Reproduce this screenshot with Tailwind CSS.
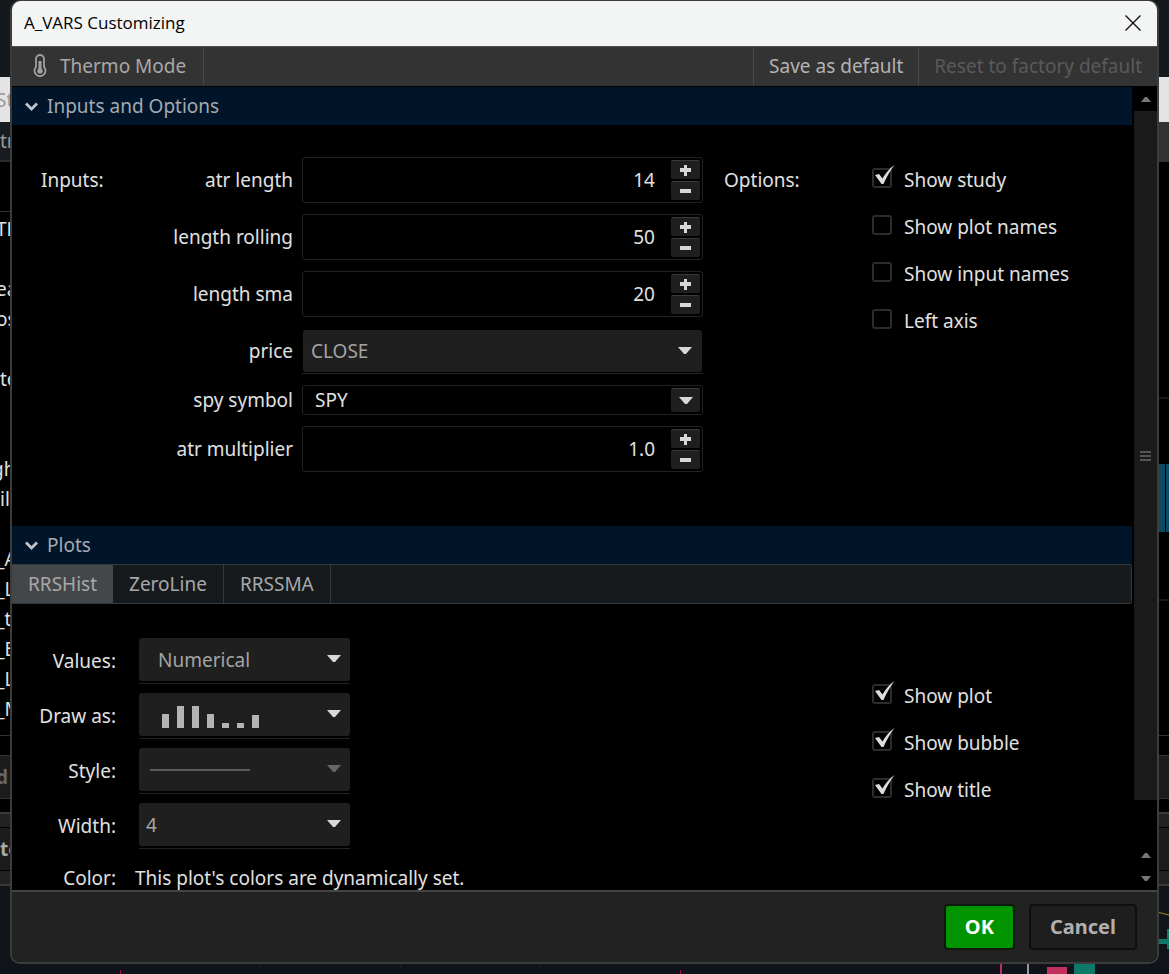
<!DOCTYPE html>
<html lang="en">
<head>
  <meta charset="UTF-8">
  <meta name="viewport" content="width=device-width, initial-scale=1.0">
  <title>A_VARS Customizing</title>
  <script src="https://cdn.jsdelivr.net/npm/@tailwindcss/browser@4"></script>
</head>
<body class="bg-[#10141a] font-['Noto_Sans','Open_Sans',sans-serif] text-[19px] leading-6 text-[#e0e0e0]">
  <div class="relative h-screen overflow-hidden pb-[10px]">

    <!-- windows behind the dialog -->
    <div class="absolute inset-0 overflow-hidden" aria-hidden="true">
      <div class="h-[77px] bg-[#14191e]"></div>
      <div class="flex h-[45px] items-center bg-[#e4e4e4] text-[#999]"><span class="-ml-1">St</span></div>
      <div class="flex h-10 items-center border-b-2 border-[#2c2c2c] bg-[#181b20] text-[#999]">tr</div>
      <div class="h-[50px] border-b border-[#333] bg-black"></div>
      <div class="flex h-[523px] flex-col bg-black pt-[2px]">
        <div class="-ml-1 flex h-[30px] items-center">TF</div>
        <div class="h-[30px]"></div>
        <div class="-ml-1 flex h-[30px] items-center">ea</div>
        <div class="-ml-1 flex h-[30px] items-center">os</div>
        <div class="h-[30px]"></div>
        <div class="flex h-[30px] items-center">te</div>
        <div class="h-[60px]"></div>
        <div class="-ml-2 flex h-[30px] items-center">gh</div>
        <div class="flex h-[30px] items-center">il</div>
        <div class="h-[30px]"></div>
        <div class="-ml-1 flex h-[30px] items-center">_A</div>
        <div class="-ml-1 flex h-[30px] items-center">_L</div>
        <div class="-ml-1 flex h-[30px] items-center">_t</div>
        <div class="-ml-1 flex h-[30px] items-center">_E</div>
        <div class="-ml-1 flex h-[30px] items-center">_L</div>
        <div class="-ml-1 flex h-[30px] items-center">_M</div>
      </div>
      <div class="h-5 border-t border-[#333] bg-black"></div>
      <div class="flex h-11 items-center border-y border-[#333] bg-[#1c1c1c] font-bold text-[#666]"><span class="-ml-1">d</span></div>
      <div class="h-[13px] bg-black"></div>
      <div class="h-[15px] border-t-2 border-[#3a3a3a] bg-[#222]"></div>
      <div class="flex h-11 items-center border-y border-black bg-[#1c1c1c] font-bold text-[#aaa]">te</div>
      <div class="h-[15px] border-b-2 border-[#3a3a3a] bg-[#222]"></div>

      <!-- chart pieces along the right and bottom edges -->
      <svg class="absolute right-0 top-0" width="12" height="974" viewBox="0 0 12 974">
        <path d="M0 122h12v40H0z" fill="#333"/>
        <path d="M0 163h12v570H0z" fill="#000"/>
        <path d="M0 398h12M0 600h12" stroke="#333"/>
        <path d="M2 464h6v68H2zM9 464h3v68H9z" fill="#0b4a63"/>
        <path d="M0 912l12 3" stroke="#b08c10" fill="none"/>
        <path d="M2 939h8v-10h2v20h-2v-5H2z" fill="#0c7a6b"/>
      </svg>
      <svg class="absolute bottom-0 right-0" width="200" height="12" viewBox="0 0 200 12">
        <path d="M21 1h20M32 1v11" stroke="#b8315f" fill="none" stroke-width="2"/>
        <path d="M59 0v12" stroke="#999" stroke-width="2"/>
        <path d="M78 5h20v7H78z" fill="#c2305f"/>
        <path d="M105 0h21v12h-21z" fill="#0c7a6b"/>
      </svg>
      <svg class="absolute bottom-0 left-0" width="700" height="12" viewBox="0 0 700 12">
        <path d="M120.500 8v4M680.500 8v4" stroke="#a01030"/>
        <path d="M260 5h1M400 5h1M540 5h1" stroke="#333"/>
      </svg>
    </div>

    <!-- dialog -->
    <main class="relative mx-[10px] flex h-full flex-col overflow-hidden rounded-[10px] border-2 border-t border-[#3c3c3c] bg-black">
      <header class="flex h-[45px] shrink-0 items-center justify-between bg-[#f3f4f4] pb-[2px] pl-3 pr-4 text-black">
        <h1 class="font-['Open_Sans','Noto_Sans',sans-serif] text-[17px]">A_VARS Customizing</h1>
        <button type="button" aria-label="Close" class="flex h-4 w-4 items-center justify-center">
          <svg width="16" height="16" viewBox="0 0 16 16" fill="none" stroke="#111" stroke-width="1.400"><path d="M.5.5l15 15M15.500.5l-15 15"/></svg>
        </button>
      </header>

      <div class="flex h-10 shrink-0 border-t border-[#505050] bg-[#333] pb-px">
        <button type="button" class="flex items-center gap-3 border-r border-[#4a4a4a] pl-5 pr-[17px] text-[#a8a8a8]">
          <svg width="16" height="24" viewBox="0 0 16 24" fill="none" stroke="#a0a0a0" stroke-width="1.800">
            <path d="M4 13V5a4 4 0 0 1 8 0v8a5.500 5.500 0 1 1-8 0z"/>
            <path d="M8 7v10" stroke-width="3"/>
            <circle cx="8" cy="17" r="2.700" fill="#a0a0a0" stroke="none"/>
          </svg>
          Thermo Mode
        </button>
        <div class="flex-1"></div>
        <button type="button" class="border-l border-[#4a4a4a] px-[15px] text-[#b4b4b4]">Save as default</button>
        <button type="button" disabled class="border-l border-[#4a4a4a] px-[15px] text-[#5a5a5a]">Reset to factory default</button>
      </div>

      <div class="flex min-h-0 flex-1 border-t border-black">
        <div class="min-w-0 flex-1 overflow-hidden">
          <h2>
            <button type="button" class="flex h-[38px] w-full items-center gap-[9px] bg-[#00152a] pl-[13px] text-[#a4aab0]">
              <svg width="13" height="9" viewBox="0 0 13 9" fill="none" stroke="#c0c4c8" stroke-width="2.800"><path d="M1 1.500l5.500 5.500L12 1.500"/></svg>
              Inputs and Options
            </button>
          </h2>

          <section class="flex pb-[54px] pt-8">
            <h3 class="w-[110px] shrink-0 pl-[29px] pt-[11px]">Inputs:</h3>
            <div class="mr-[21px] grid min-w-0 flex-1 grid-cols-[171px_minmax(0,1fr)] items-center gap-x-[9px] gap-y-[11px]">
              <label for="atr-length" class="text-right">atr length</label>
              <div class="flex h-[46px] rounded-[3px] border border-[#222] bg-black p-[2px]">
                <input id="atr-length" type="text" inputmode="numeric" value="14" class="min-w-0 flex-1 pr-4 text-right outline-none">
                <div class="flex w-[29px] flex-col gap-[2px]">
                  <button type="button" aria-label="Increase atr length" class="flex flex-1 items-center justify-center rounded-[2px] border-t border-[#3a3a3a] bg-[#1f1f1f]"><svg width="11" height="11" viewBox="0 0 11 11" fill="#d8d8d8"><path d="M4 0h3v3h4v4H7v4H4V7H0V3h4z"/></svg></button>
                  <button type="button" aria-label="Decrease atr length" class="flex flex-1 items-center justify-center rounded-[2px] border-t border-[#3a3a3a] bg-[#1f1f1f]"><svg width="11" height="11" viewBox="0 0 11 11" fill="#d8d8d8"><path d="M0 3h11v4H0z"/></svg></button>
                </div>
              </div>

              <label for="length-rolling" class="text-right">length rolling</label>
              <div class="flex h-[46px] rounded-[3px] border border-[#222] bg-black p-[2px]">
                <input id="length-rolling" type="text" inputmode="numeric" value="50" class="min-w-0 flex-1 pr-4 text-right outline-none">
                <div class="flex w-[29px] flex-col gap-[2px]">
                  <button type="button" aria-label="Increase length rolling" class="flex flex-1 items-center justify-center rounded-[2px] border-t border-[#3a3a3a] bg-[#1f1f1f]"><svg width="11" height="11" viewBox="0 0 11 11" fill="#d8d8d8"><path d="M4 0h3v3h4v4H7v4H4V7H0V3h4z"/></svg></button>
                  <button type="button" aria-label="Decrease length rolling" class="flex flex-1 items-center justify-center rounded-[2px] border-t border-[#3a3a3a] bg-[#1f1f1f]"><svg width="11" height="11" viewBox="0 0 11 11" fill="#d8d8d8"><path d="M0 3h11v4H0z"/></svg></button>
                </div>
              </div>

              <label for="length-sma" class="text-right">length sma</label>
              <div class="flex h-[46px] rounded-[3px] border border-[#222] bg-black p-[2px]">
                <input id="length-sma" type="text" inputmode="numeric" value="20" class="min-w-0 flex-1 pr-4 text-right outline-none">
                <div class="flex w-[29px] flex-col gap-[2px]">
                  <button type="button" aria-label="Increase length sma" class="flex flex-1 items-center justify-center rounded-[2px] border-t border-[#3a3a3a] bg-[#1f1f1f]"><svg width="11" height="11" viewBox="0 0 11 11" fill="#d8d8d8"><path d="M4 0h3v3h4v4H7v4H4V7H0V3h4z"/></svg></button>
                  <button type="button" aria-label="Decrease length sma" class="flex flex-1 items-center justify-center rounded-[2px] border-t border-[#3a3a3a] bg-[#1f1f1f]"><svg width="11" height="11" viewBox="0 0 11 11" fill="#d8d8d8"><path d="M0 3h11v4H0z"/></svg></button>
                </div>
              </div>

              <label for="price" class="text-right">price</label>
              <div class="relative border-b border-[#262626] px-px pb-px pt-[2px]">
                <select id="price" class="block h-[42px] w-full appearance-none rounded-[3px] bg-[#1f1f1f] pl-2 text-[#a4a4a4] outline-none">
                  <option>CLOSE</option>
                </select>
                <svg class="pointer-events-none absolute right-[11px] top-[19px]" width="14" height="8" viewBox="0 0 14 8" fill="#d8d8d8"><path d="M0 0h14L8 7H6z"/></svg>
              </div>

              <label for="spy-symbol" class="text-right">spy symbol</label>
              <div class="flex h-[30px] rounded-[3px] border border-[#222] bg-black p-[2px]">
                <input id="spy-symbol" type="text" value="SPY" class="min-w-0 flex-1 pl-[10px] outline-none">
                <button type="button" aria-label="Choose symbol" class="flex w-[29px] items-center justify-center rounded-[2px] border-t border-[#3a3a3a] bg-[#1f1f1f]"><svg width="14" height="8" viewBox="0 0 14 8" fill="#d8d8d8"><path d="M0 0h14L8 7H6z"/></svg></button>
              </div>

              <label for="atr-multiplier" class="text-right">atr multiplier</label>
              <div class="flex h-[46px] rounded-[3px] border border-[#222] bg-black p-[2px]">
                <input id="atr-multiplier" type="text" inputmode="decimal" value="1.0" class="min-w-0 flex-1 pr-4 text-right outline-none">
                <div class="flex w-[29px] flex-col gap-[2px]">
                  <button type="button" aria-label="Increase atr multiplier" class="flex flex-1 items-center justify-center rounded-[2px] border-t border-[#3a3a3a] bg-[#1f1f1f]"><svg width="11" height="11" viewBox="0 0 11 11" fill="#d8d8d8"><path d="M4 0h3v3h4v4H7v4H4V7H0V3h4z"/></svg></button>
                  <button type="button" aria-label="Decrease atr multiplier" class="flex flex-1 items-center justify-center rounded-[2px] border-t border-[#3a3a3a] bg-[#1f1f1f]"><svg width="11" height="11" viewBox="0 0 11 11" fill="#d8d8d8"><path d="M0 3h11v4H0z"/></svg></button>
                </div>
              </div>
            </div>

            <h3 class="w-[148px] shrink-0 pt-[11px]">Options:</h3>
            <div class="flex w-[260px] shrink-0 flex-col gap-[23px] pt-[11px]">
              <label class="relative flex h-6 items-center gap-3">
                <input type="checkbox" checked class="peer mb-1 h-5 w-5 appearance-none rounded-[3px] border-2 border-[#2c2c2c]">
                <svg class="pointer-events-none absolute -top-1 left-0 hidden peer-checked:block" width="24" height="24" viewBox="0 -4 24 24" fill="#dcdcdc"><path d="M3 7L7 6 10.500 10.500C13 6 17 .5 22.500-3 18 3 14.500 9 11.500 16L9.500 16z"/></svg>
                Show study
              </label>
              <label class="flex h-6 items-center gap-3"><input type="checkbox" class="mb-1 h-5 w-5 appearance-none rounded-[3px] border-2 border-[#2c2c2c]">Show plot names</label>
              <label class="flex h-6 items-center gap-3"><input type="checkbox" class="mb-1 h-5 w-5 appearance-none rounded-[3px] border-2 border-[#2c2c2c]">Show input names</label>
              <label class="flex h-6 items-center gap-3"><input type="checkbox" class="mb-1 h-5 w-5 appearance-none rounded-[3px] border-2 border-[#2c2c2c]">Left axis</label>
            </div>
          </section>

          <h2>
            <button type="button" class="flex h-[38px] w-full items-center gap-[9px] bg-[#00152a] pl-[13px] text-[#a4aab0]">
              <svg width="13" height="9" viewBox="0 0 13 9" fill="none" stroke="#c0c4c8" stroke-width="2.800"><path d="M1 1.500l5.500 5.500L12 1.500"/></svg>
              Plots
            </button>
          </h2>
          <div role="tablist" class="flex h-10 rounded-r-[2px] border-y border-r border-[#33383c] bg-[#161a1d] text-[#a8a8a8]">
            <button type="button" role="tab" aria-selected="true" class="bg-[#44474a] px-4">RRSHist</button>
            <button type="button" role="tab" class="border-r border-[#33383c] px-4">ZeroLine</button>
            <button type="button" role="tab" class="border-r border-[#33383c] px-4">RRSSMA</button>
          </div>

          <section class="flex pt-[34px]">
            <div class="grid min-w-0 flex-1 grid-cols-[104px_211px] content-start items-center gap-x-[23px] gap-y-[9px]">
              <label for="values" class="text-right">Values:</label>
              <div class="relative border-b border-[#222] pb-[2px]">
                <select id="values" class="block h-[43px] w-full appearance-none rounded-[3px] bg-[#1f1f1f] pl-[19px] text-[#a4a4a4] outline-none">
                  <option>Numerical</option>
                </select>
                <svg class="pointer-events-none absolute right-[9px] top-[17px]" width="14" height="8" viewBox="0 0 14 8" fill="#d8d8d8"><path d="M0 0h14L8 7H6z"/></svg>
              </div>

              <label for="draw-as" class="text-right">Draw as:</label>
              <div class="relative border-b border-[#222] pb-[2px]">
                <select id="draw-as" class="block h-[43px] w-full appearance-none rounded-[3px] bg-[#1f1f1f] outline-none">
                  <option value="histogram" aria-label="Histogram"></option>
                </select>
                <svg class="pointer-events-none absolute left-[23px] top-[13px]" width="98" height="22" viewBox="0 0 98 22" fill="#b4b4b4">
                  <path d="M0 8h7v14H0zM15 0h7v22h-7zM30 0h7v22h-7zM45 8h7v14h-7zM60 17h7v5h-7zM75 17h7v5h-7zM90 9h7v13h-7z"/>
                </svg>
                <svg class="pointer-events-none absolute right-[9px] top-[17px]" width="14" height="8" viewBox="0 0 14 8" fill="#d8d8d8"><path d="M0 0h14L8 7H6z"/></svg>
              </div>

              <label for="style" class="text-right">Style:</label>
              <div class="relative border-b border-[#222] pb-[2px]">
                <select id="style" disabled class="block h-[43px] w-full appearance-none rounded-[3px] bg-[#1f1f1f] outline-none">
                  <option value="solid" aria-label="Solid"></option>
                </select>
                <svg class="pointer-events-none absolute left-[11px] top-[21px]" width="100" height="2" viewBox="0 0 100 2" fill="#5c5c5c"><path d="M0 0h100v2H0z"/></svg>
                <svg class="pointer-events-none absolute right-[9px] top-[17px]" width="14" height="8" viewBox="0 0 14 8" fill="#666"><path d="M0 0h14L8 7H6z"/></svg>
              </div>

              <label for="width" class="text-right">Width:</label>
              <div class="relative border-b border-[#222] pb-[2px]">
                <select id="width" class="block h-[43px] w-full appearance-none rounded-[3px] bg-[#1f1f1f] pl-[7px] text-[#a4a4a4] outline-none">
                  <option>4</option>
                </select>
                <svg class="pointer-events-none absolute right-[9px] top-[17px]" width="14" height="8" viewBox="0 0 14 8" fill="#d8d8d8"><path d="M0 0h14L8 7H6z"/></svg>
              </div>

              <div class="col-span-2 flex h-10 items-center gap-[19px] whitespace-nowrap">
                <span class="w-[104px] shrink-0 text-right">Color:</span>
                <span>This plot's colors are dynamically set.</span>
              </div>
            </div>

            <div class="flex w-[260px] shrink-0 flex-col gap-[23px] pt-[46px]">
              <label class="relative flex h-6 items-center gap-3">
                <input type="checkbox" checked class="peer mb-1 h-5 w-5 appearance-none rounded-[3px] border-2 border-[#2c2c2c]">
                <svg class="pointer-events-none absolute -top-1 left-0 hidden peer-checked:block" width="24" height="24" viewBox="0 -4 24 24" fill="#dcdcdc"><path d="M3 7L7 6 10.500 10.500C13 6 17 .5 22.500-3 18 3 14.500 9 11.500 16L9.500 16z"/></svg>
                Show plot
              </label>
              <label class="relative flex h-6 items-center gap-3">
                <input type="checkbox" checked class="peer mb-1 h-5 w-5 appearance-none rounded-[3px] border-2 border-[#2c2c2c]">
                <svg class="pointer-events-none absolute -top-1 left-0 hidden peer-checked:block" width="24" height="24" viewBox="0 -4 24 24" fill="#dcdcdc"><path d="M3 7L7 6 10.500 10.500C13 6 17 .5 22.500-3 18 3 14.500 9 11.500 16L9.500 16z"/></svg>
                Show bubble
              </label>
              <label class="relative flex h-6 items-center gap-3">
                <input type="checkbox" checked class="peer mb-1 h-5 w-5 appearance-none rounded-[3px] border-2 border-[#2c2c2c]">
                <svg class="pointer-events-none absolute -top-1 left-0 hidden peer-checked:block" width="24" height="24" viewBox="0 -4 24 24" fill="#dcdcdc"><path d="M3 7L7 6 10.500 10.500C13 6 17 .5 22.500-3 18 3 14.500 9 11.500 16L9.500 16z"/></svg>
                Show title
              </label>
            </div>
          </section>
        </div>

        <!-- scrollbar -->
        <div class="ml-[2px] flex w-[23px] shrink-0 flex-col bg-black">
          <button type="button" aria-label="Scroll up" class="flex h-6 items-center justify-center"><svg width="10" height="5" viewBox="0 0 10 5" fill="#777"><path d="M0 5l4-5h2l4 5z"/></svg></button>
          <div class="flex flex-1 items-center justify-center bg-[#1a1a1a]">
            <svg width="11" height="10" viewBox="0 0 11 10" fill="#555"><path d="M0 0h11v2H0zM0 4h11v2H0zM0 8h11v2H0z"/></svg>
          </div>
          <div class="h-11"></div>
          <button type="button" aria-label="Page up" class="flex h-[23px] items-center justify-center"><svg width="10" height="5" viewBox="0 0 10 5" fill="#777"><path d="M0 5l4-5h2l4 5z"/></svg></button>
          <button type="button" aria-label="Scroll down" class="flex h-[23px] items-center justify-center"><svg width="10" height="5" viewBox="0 0 10 5" fill="#777"><path d="M0 0l4 5h2l4-5z"/></svg></button>
        </div>
      </div>

      <footer class="flex h-[72px] shrink-0 items-center justify-end gap-[14px] border-t-2 border-[#444] bg-[#222] pr-5 text-[20px] font-bold">
        <button type="button" class="h-[46px] rounded-[4px] border-2 border-[#0c1a0c] bg-[#009500] px-[19px] text-white">OK</button>
        <button type="button" class="h-[46px] rounded-[4px] border-2 border-[#0e0e0e] bg-[#1e1e1e] px-[19px] text-[#b0b0b0]">Cancel</button>
      </footer>
    </main>
  </div>
</body>
</html>
